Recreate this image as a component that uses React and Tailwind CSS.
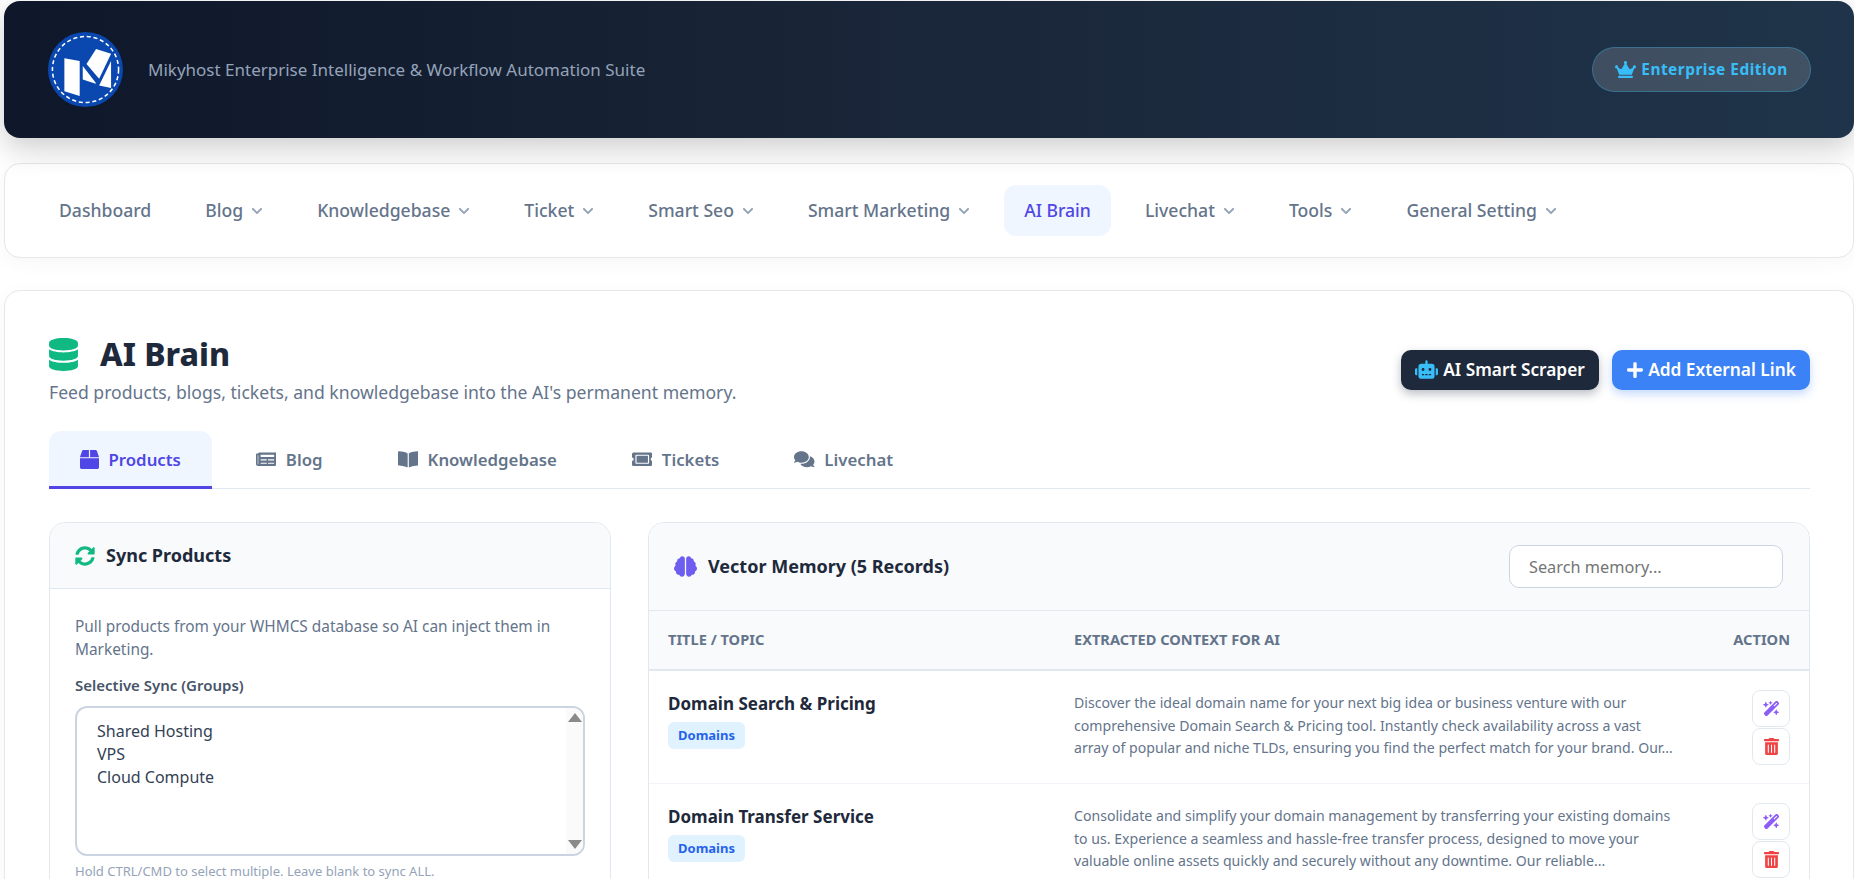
import React from 'react';
import {
  FaBookOpen, FaBox, FaBrain, FaChevronDown, FaComments, FaCrown, FaDatabase, FaNewspaper,
  FaPlus, FaRobot, FaSyncAlt, FaTicketAlt, FaTrashAlt,
} from 'react-icons/fa';
import { FaWandMagicSparkles } from 'react-icons/fa6';

const navItems = [
  { label: 'Dashboard' },
  { label: 'Blog', menu: true },
  { label: 'Knowledgebase', menu: true },
  { label: 'Ticket', menu: true },
  { label: 'Smart Seo', menu: true },
  { label: 'Smart Marketing', menu: true },
  { label: 'AI Brain', active: true },
  { label: 'Livechat', menu: true },
  { label: 'Tools', menu: true },
  { label: 'General Setting', menu: true },
];

const tabs = [
  { label: 'Products', Icon: FaBox, size: 'text-[19px]', active: true },
  { label: 'Blog', Icon: FaNewspaper, size: 'text-[20.5px]' },
  { label: 'Knowledgebase', Icon: FaBookOpen, size: 'text-[20.5px]' },
  { label: 'Tickets', Icon: FaTicketAlt, size: 'text-[20.5px]' },
  { label: 'Livechat', Icon: FaComments, size: 'text-[20.5px]' },
];

const records = [
  {
    title: 'Domain Search & Pricing',
    tag: 'Domains',
    lines: [
      'Discover the ideal domain name for your next big idea or business venture with our',
      'comprehensive Domain Search & Pricing tool. Instantly check availability across a vast',
      'array of popular and niche TLDs, ensuring you find the perfect match for your brand. Our...',
    ],
  },
  {
    title: 'Domain Transfer Service',
    tag: 'Domains',
    lines: [
      'Consolidate and simplify your domain management by transferring your existing domains',
      'to us. Experience a seamless and hassle-free transfer process, designed to move your',
      'valuable online assets quickly and securely without any downtime. Our reliable...',
    ],
  },
];

function Logo() {
  return (
    <svg viewBox="0 0 220 220" className="w-[75px] h-[75px] shrink-0">
      <circle cx="110" cy="110" r="110" fill="#0a48b0" />
      <circle cx="110" cy="110" r="97" fill="none" stroke="#fff" strokeWidth="4.5" strokeDasharray="12 8" />
      <polygon points="48,77 93,85 93,188 48,174" fill="#fff" />
      <polygon points="102,100 140,149 140,152 102,139" fill="#fff" />
      <polygon points="141,50 185,64 150,137 113,94" fill="#fff" />
      <polygon points="185,85 185,164 150,157" fill="#fff" />
    </svg>
  );
}

function ListScrollbar() {
  return (
    <div className="w-[17px] shrink-0 bg-[#fafafa] flex flex-col justify-between items-center py-[5px]">
      <svg viewBox="0 0 14 9" className="w-[14px] h-[9px]"><polygon points="7,0 14,9 0,9" fill="#8a8a8a" /></svg>
      <svg viewBox="0 0 14 9" className="w-[14px] h-[9px]"><polygon points="0,0 14,0 7,9" fill="#8a8a8a" /></svg>
    </div>
  );
}

export default function App() {
  return (
    <div className="h-[879px] overflow-hidden bg-white pl-[4px] pt-[1px] font-['Noto_Sans',sans-serif]">
      {/* Top banner */}
      <header className="relative z-10 h-[137px] rounded-2xl bg-gradient-to-r from-[#0f172a] via-[#1a2639] to-[#1f344a] shadow-[0_10px_30px_rgba(0,0,0,0.2)] flex items-center justify-between pl-[44px] pr-[43px]">
        <div className="flex items-center gap-[25px]">
          <Logo />
          <span className="text-[17px] text-[#94a3b8]">Mikyhost Enterprise Intelligence &amp; Workflow Automation Suite</span>
        </div>
        <div className="h-[45px] w-[219px] rounded-full bg-white/15 border border-[#38bdf8]/30 flex items-center justify-center gap-[5px] text-[#38bdf8] text-[15.4px] font-bold tracking-[0.5px]">
          <FaCrown className="text-[21px]" />
          Enterprise Edition
        </div>
      </header>

      {/* Main menu */}
      <nav className="mt-[25px] h-[95px] rounded-2xl bg-white border border-[#e5e7eb] shadow-[0_4px_20px_rgba(0,0,0,0.04)] flex items-center gap-[14px] px-[34px]">
        {navItems.map((item) => (
          <div
            key={item.label}
            className={`h-[51px] px-[20px] rounded-xl flex items-center gap-[8px] text-[17.6px] font-medium ${
              item.active ? 'bg-[#eff6ff] text-[#4f46e5]' : 'text-[#64748b]'
            }`}
          >
            {item.label}
            {item.menu && <FaChevronDown className="text-[12px] text-[#94a3b8]" />}
          </div>
        ))}
      </nav>

      <main className="mt-[32px] rounded-t-2xl bg-white border border-[#e5e7eb] shadow-[0_4px_20px_rgba(0,0,0,0.04)] pl-[44px] pr-[43px] pt-[45px] pb-[40px]">
        <div className="flex items-center justify-between">
          <div>
            <h1 className="flex items-center gap-[20px] text-[32px] leading-[36px] font-extrabold text-[#1e293b]">
              <FaDatabase className="text-[#10b981] text-[33px] ml-[-2px]" />
              AI Brain
            </h1>
            <p className="mt-[7px] text-[17.6px] leading-[26px] text-[#64748b]">
              Feed products, blogs, tickets, and knowledgebase into the AI's permanent memory.
            </p>
          </div>
          <div className="flex items-center gap-[13px] mt-[-2px]">
            <button className="h-[40px] w-[198px] rounded-[10px] bg-[#1e293b] text-white text-[17.3px] font-semibold flex items-center justify-center gap-[5px] shadow-[0_4px_10px_rgba(30,41,59,0.3)]">
              <FaRobot className="text-[#38bdf8] text-[23px]" />
              AI Smart Scraper
            </button>
            <button className="h-[40px] w-[198px] rounded-[10px] bg-[#3b82f6] text-white text-[17.3px] font-semibold flex items-center justify-center gap-[4px] shadow-[0_4px_10px_rgba(59,130,246,0.3)]">
              <FaPlus className="text-[18px]" />
              Add External Link
            </button>
          </div>
        </div>

        {/* Section tabs */}
        <div className="mt-[26px] flex gap-[13px] border-b border-[#e2e8f0]">
          {tabs.map(({ label, Icon, size, active }) => (
            <div
              key={label}
              className={`h-[58px] mb-[-1px] pt-[2px] px-[31px] rounded-t-xl flex items-center gap-[9.5px] text-[16.8px] font-semibold border-b-[3px] ${
                active ? 'bg-[#eff6ff] text-[#4f46e5] border-[#4f46e5]' : 'text-[#64748b] border-transparent'
              }`}
            >
              <Icon className={size} />
              {label}
            </div>
          ))}
        </div>

        <div className="mt-[33px] flex gap-[37px] items-start">
          {/* Sync panel */}
          <section className="w-[562px] shrink-0 rounded-2xl border border-[#e2e8f0] overflow-hidden">
            <div className="h-[66px] bg-[#f8fafc] border-b border-[#e2e8f0] flex items-center gap-[11px] px-[25px]">
              <FaSyncAlt className="text-[#10b981] text-[20px]" />
              <h3 className="text-[18px] font-bold text-[#1e293b]">Sync Products</h3>
            </div>
            <div className="px-[25px] pt-[26px] pb-[25px]">
              <p className="text-[15.4px] leading-[23px] text-[#64748b]">
                Pull products from your WHMCS database so AI can inject them in Marketing.
              </p>
              <label className="block mt-[14px] text-[15px] leading-[20px] font-semibold text-[#475569]">Selective Sync (Groups)</label>
              <div className="mt-[11px] h-[150px] flex rounded-xl border-2 border-[#cbd5e1] overflow-hidden">
                <div className="flex-1 pl-[20px] pt-[12px] text-[16px] leading-[23px] text-[#334155]">
                  <div>Shared Hosting</div>
                  <div>VPS</div>
                  <div>Cloud Compute</div>
                </div>
                <ListScrollbar />
              </div>
              <p className="mt-[6px] text-[13px] leading-[18px] text-[#94a3b8]">Hold CTRL/CMD to select multiple. Leave blank to sync ALL.</p>
            </div>
          </section>

          {/* Memory table */}
          <section className="flex-1 rounded-2xl border border-[#e2e8f0] overflow-hidden">
            <div className="h-[88px] bg-[#f8fafc] border-b border-[#e2e8f0] flex items-center justify-between pl-[25px] pr-[26px]">
              <div className="flex items-center gap-[11px]">
                <FaBrain className="text-[#6d5ef0] text-[23px]" />
                <h3 className="text-[18px] font-bold text-[#1e293b]">Vector Memory (5 Records)</h3>
              </div>
              <input
                placeholder="Search memory..."
                className="w-[274px] h-[43px] rounded-[10px] bg-white border border-[#cbd5e1] px-[19px] text-[16.3px] placeholder:text-[#757575] outline-none"
              />
            </div>
            <div className="h-[60px] bg-[#f8fafc] border-b-2 border-[#e2e8f0] grid grid-cols-[406px_1fr_auto] items-center px-[19px] text-[14.6px] font-bold text-[#64748b]">
              <span>TITLE / TOPIC</span>
              <span>EXTRACTED CONTEXT FOR AI</span>
              <span>ACTION</span>
            </div>
            {records.map((rec) => (
              <div key={rec.title} className="h-[113px] border-b border-[#f1f5f9] grid grid-cols-[406px_1fr_auto] pl-[19px] pr-[19px] pt-[19px]">
                <div className="pt-[2px]">
                  <div className="text-[17px] leading-[24px] font-bold text-[#1e293b]">{rec.title}</div>
                  <span className="inline-block mt-[6px] h-[27px] rounded-md bg-[#e0f2fe] px-[10px] text-[13px] leading-[27px] font-bold text-[#2563eb]">{rec.tag}</span>
                </div>
                <div className="pt-[2px] text-[14.1px] leading-[22.5px] text-[#64748b]">
                  {rec.lines.map((line) => <div key={line} className="whitespace-nowrap">{line}</div>)}
                </div>
                <div className="flex flex-col gap-[1px]">
                  <button className="w-[38px] h-[37px] rounded-lg bg-white border border-[#e2e8f0] flex items-center justify-center text-[#8b5cf6] text-[17px]"><FaWandMagicSparkles /></button>
                  <button className="w-[38px] h-[37px] rounded-lg bg-white border border-[#e2e8f0] flex items-center justify-center text-[#ef4444] text-[17px]"><FaTrashAlt /></button>
                </div>
              </div>
            ))}
          </section>
        </div>
      </main>
    </div>
  );
}
